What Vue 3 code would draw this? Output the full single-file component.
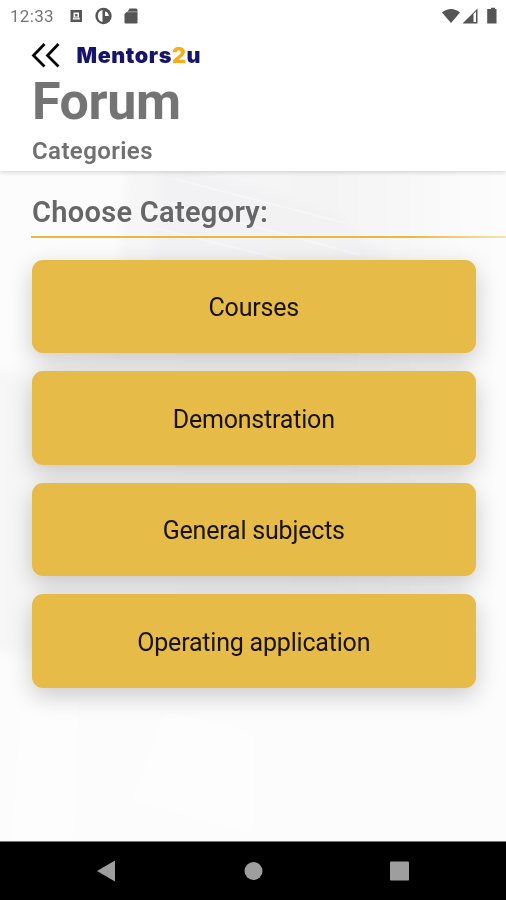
<template>
	<div class="screen">
		<header class="header">
			<div class="status-bar">
				<span class="time">12:33</span>
				<svg class="status-left" width="70" height="18" viewBox="0 0 70 18">
					<path fill="#555" d="M.500 3h11.500v12H.500z" />
					<path fill="#fff" d="M3.500 5.500h5.500V10l1 2.500H2.500l1-2.500z" />
					<path fill="#666" d="M5 7h2.500v2.500H5zM4 10.500h4.500v.700H4z" />
					<circle cx="33.500" cy="9" r="8.200" fill="#555" />
					<path fill="#fff" d="M32.500 3a6.200 6.200 0 0 0 0 12zM35 4.500a5 5 0 0 1 3.800 4.500H35z" />
					<path fill="#555" d="M59.500 1.500H66a1.500 1.500 0 0 1 1.500 1.500v1h-9.500zM56.500 5h11v10.500a1 1 0 0 1-1 1h-11a1 1 0 0 1-1-1V7z" />
					<path fill="#888" d="M58 4h9.500v1.500h-11z" />
				</svg>
				<svg class="status-right" width="56" height="18" viewBox="0 0 56 18">
					<path fill="#555" d="M0 5.500C5 .8 13 .8 18 5.500L9 16z" />
					<path fill="#555" fill-rule="evenodd" d="M35.500 1.500V16.500H20.500zM31.500 7v8h2.500V4.500z" />
					<path fill="#555" d="M47 2h2V.800h4V2h1.500v14.500h-9.300V2z" />
				</svg>
			</div>
			<div class="brand">
				<svg class="back" width="30" height="26" viewBox="0 0 30 26">
					<path d="M14.500 2L3.500 13.500l11 11M28.500 2l-11 11.500 11 11" fill="none" stroke="#080808" stroke-width="2.800" />
				</svg>
				<span class="logo">Mentors<span class="two">2</span>u</span>
			</div>
			<h1>Forum</h1>
			<h2>Categories</h2>
		</header>

		<main class="content">
			<svg class="backdrop" width="506" height="670" viewBox="0 0 506 670">
				<defs>
					<linearGradient id="fade" x1="0" x2="1" y1="0" y2="0">
						<stop offset="0" stop-color="#f7f7f8" />
						<stop offset="0.650" stop-color="#f4f4f5" />
						<stop offset="1" stop-color="#fdfdfd" />
					</linearGradient>
					<filter id="soft">
						<feGaussianBlur stdDeviation="4" />
					</filter>
				</defs>
				<g filter="url(#soft)">
					<path fill="url(#fade)" d="M128 -10H516V500L120 500L-10 480V202L110 186z" />
					<path fill="#f0f0f1" opacity="0.450" d="M162 -10L330 40L400 95L290 100L150 95z" />
					<path fill="#fff" opacity="0.400" d="M20 540L80 525L75 670H10zM130 630L165 540L255 560V665z" />
				</g>
				<path stroke="#fff" opacity="0.300" stroke-width="2" d="M175 8L345 52M162 30L360 84M155 57L350 105" />
			</svg>
			<h3>Choose Category:</h3>
			<div class="line"></div>
			<div class="list">
				<button v-for="item in categories" :key="item" class="card">
					<span>{{ item }}</span>
				</button>
			</div>
		</main>

		<nav class="nav-bar">
			<svg width="506" height="57" viewBox="0 0 506 57">
				<g fill="#9e9e9e">
					<path d="M97 29L115 18.500v21z" />
					<circle cx="253.500" cy="29" r="9" />
					<rect x="390" y="19.500" width="19" height="19" rx="1" />
				</g>
			</svg>
		</nav>
	</div>
</template>

<script setup>
	import { ref } from "vue";

	const categories = ref(["Courses", "Demonstration", "General subjects", "Operating application"]);
</script>

<style>
	body {
		margin: 0;
		background: #fff;
	}
</style>

<style scoped>
	.screen {
		width: 506px;
		height: 900px;
		display: flex;
		flex-direction: column;
		overflow: hidden;
		background: #fff;
		font-family: Roboto, "Liberation Sans", sans-serif;
	}
	svg {
		display: block;
	}
	.header {
		position: relative;
		z-index: 1;
		height: 171px;
		flex: none;
		background: #fff;
		box-shadow: 0 1px 5px rgba(0, 0, 0, 0.18);
	}
	.status-bar {
		display: flex;
		align-items: center;
		height: 32px;
		padding: 0 8px 0 10px;
	}
	.time {
		width: 60px;
		font-size: 17px;
		letter-spacing: 0.3px;
		color: #757575;
	}
	.status-right {
		margin-left: auto;
	}
	.brand {
		display: flex;
		align-items: center;
		height: 46px;
		padding-left: 30px;
	}
	.logo {
		margin-left: 16.5px;
		font-family: Inter, sans-serif;
		font-size: 21.5px;
		font-weight: 900;
		letter-spacing: 0.6px;
		line-height: 26px;
		color: #17156b;
	}
	.two {
		color: #f9ae19;
	}
	h1,
	h2,
	h3 {
		margin: 0;
		padding-left: 32px;
		white-space: nowrap;
	}
	h1 {
		height: 56px;
		font-size: 52px;
		line-height: 48px;
		font-weight: 700;
		letter-spacing: -0.4px;
		color: #747474;
	}
	h2 {
		font-size: 24px;
		line-height: 34px;
		font-weight: 600;
		letter-spacing: 0.4px;
		color: #707070;
	}
	.content {
		position: relative;
		height: 670px;
		flex: none;
		overflow: hidden;
		background: #fcfcfc;
	}
	.backdrop {
		position: absolute;
		left: 0;
		top: 0;
	}
	h3 {
		position: relative;
		height: 65px;
		font-size: 29px;
		line-height: 82px;
		font-weight: 600;
		letter-spacing: 0.3px;
		color: #666;
	}
	.line {
		position: relative;
		height: 2px;
		margin-left: 31px;
		background: linear-gradient(90deg, #edb63c 0%, #edb63c 80%, #f8e5b6 100%);
	}
	.list {
		position: relative;
		display: flex;
		flex-direction: column;
		gap: 18px;
		padding: 21.5px 30px 0 31.5px;
	}
	.card {
		display: flex;
		align-items: center;
		justify-content: center;
		height: 93.5px;
		padding: 3px 0 0;
		border: none;
		border-radius: 11px;
		background: #e6bb48;
		box-shadow: 0 8px 24px rgba(0, 0, 0, 0.2);
		font-family: inherit;
		font-size: 25px;
		letter-spacing: -0.2px;
		color: #171205;
		cursor: pointer;
	}
	.nav-bar {
		height: 58px;
		margin-top: 1px;
		flex: none;
		background: #000;
		box-shadow: 0 -1px 0 #777;
	}
</style>
